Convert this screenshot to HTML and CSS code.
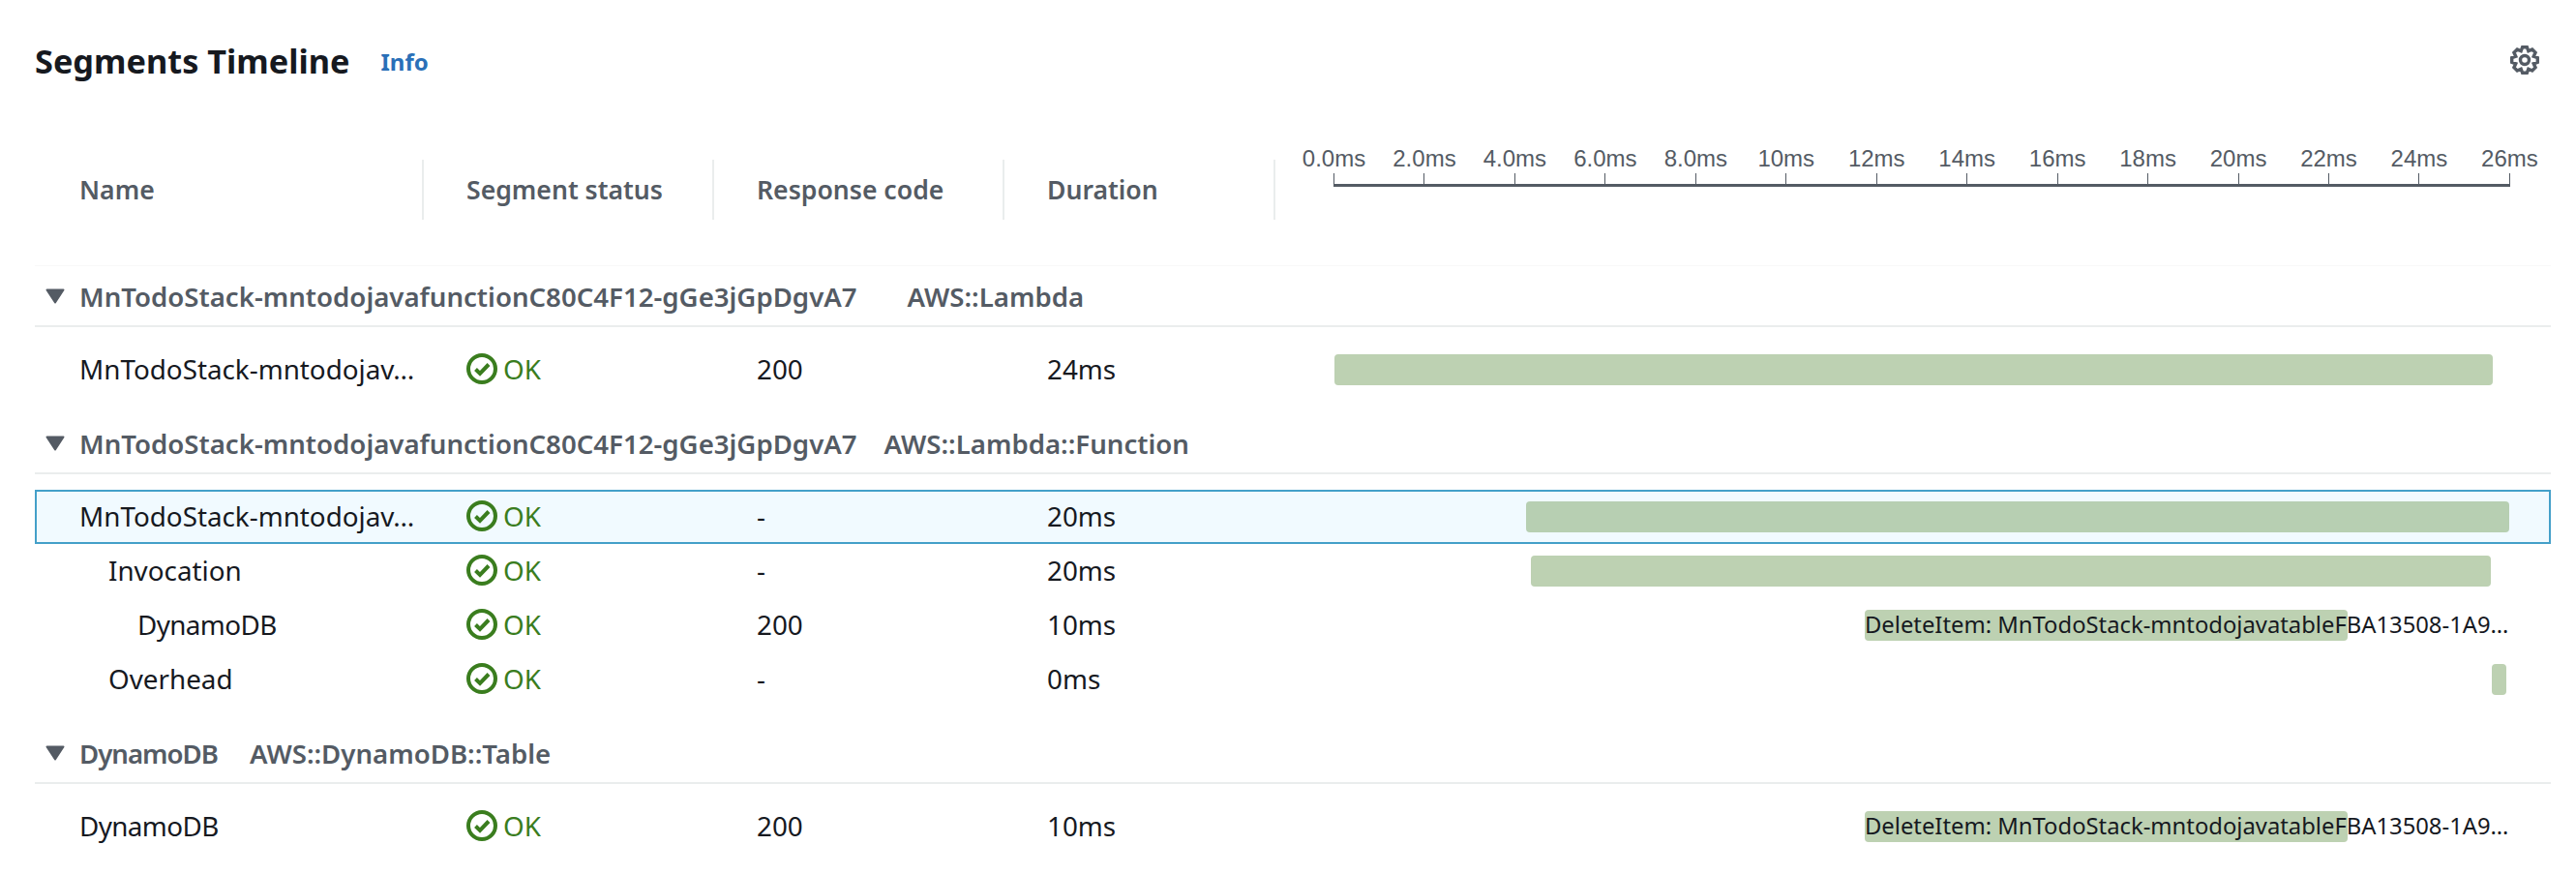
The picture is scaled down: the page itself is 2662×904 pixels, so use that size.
FILE: index.html
```html
<!DOCTYPE html>
<html lang="en">
<head>
<meta charset="utf-8">
<title>Segments Timeline</title>
<link rel="stylesheet" href="styles.css">
</head>
<body>
<main class="panel">
  <header class="title-bar">
    <h2 class="title">Segments Timeline</h2>
    <a class="info">Info</a>
    <svg class="gear" viewBox="0 0 32 32"><path d="M13.66 2.71H18.34L19.83 6.76 23.74 4.94 27.06 8.26 25.24 12.17 29.29 13.66V18.34L25.24 19.83 27.06 23.74 23.74 27.06 19.83 25.24 18.34 29.29H13.66L12.17 25.24 8.26 27.06 4.94 23.74 6.76 19.83 2.71 18.34V13.66L6.76 12.17 4.94 8.26 8.26 4.94 12.17 6.76Z"/><circle cx="16" cy="16" r="4.5"/></svg>
  </header>

  <div class="thead">
    <div class="th">Name</div>
    <div class="th">Segment status</div>
    <div class="th">Response code</div>
    <div class="th">Duration</div>
    <div class="th-axis">
      <div class="axis">
        <div class="tick"><span>0.0ms</span></div>
        <div class="tick"><span>2.0ms</span></div>
        <div class="tick"><span>4.0ms</span></div>
        <div class="tick"><span>6.0ms</span></div>
        <div class="tick"><span>8.0ms</span></div>
        <div class="tick"><span>10ms</span></div>
        <div class="tick"><span>12ms</span></div>
        <div class="tick"><span>14ms</span></div>
        <div class="tick"><span>16ms</span></div>
        <div class="tick"><span>18ms</span></div>
        <div class="tick"><span>20ms</span></div>
        <div class="tick"><span>22ms</span></div>
        <div class="tick"><span>24ms</span></div>
        <div class="tick"><span>26ms</span></div>
      </div>
    </div>
  </div>

  <section class="group">
    <div class="group-head">
      <svg class="caret" viewBox="0 0 20 16"><path d="M1.5 1.5H18.5L10 14.5Z"/></svg>
      <span class="group-name">MnTodoStack-mntodojavafunctionC80C4F12-gGe3jGpDgvA7</span>
      <span class="group-type gap-wide">AWS::Lambda</span>
    </div>
    <div class="rows">
      <div class="row">
        <div class="cell name">MnTodoStack-mntodojav…</div>
        <div class="cell status"><svg class="ok" viewBox="0 0 32 32"><circle cx="16" cy="16" r="14"/><path d="M9.5 16.5L14 21L23 11.5"/></svg>OK</div>
        <div class="cell">200</div>
        <div class="cell">24ms</div>
        <div class="track"><div class="bar" style="margin-left:1px;width:1197px"></div></div>
      </div>
    </div>
  </section>

  <section class="group">
    <div class="group-head">
      <svg class="caret" viewBox="0 0 20 16"><path d="M1.5 1.5H18.5L10 14.5Z"/></svg>
      <span class="group-name">MnTodoStack-mntodojavafunctionC80C4F12-gGe3jGpDgvA7</span>
      <span class="group-type gap-mid">AWS::Lambda::Function</span>
    </div>
    <div class="rows">
      <div class="row selected">
        <div class="cell name">MnTodoStack-mntodojav…</div>
        <div class="cell status"><svg class="ok" viewBox="0 0 32 32"><circle cx="16" cy="16" r="14"/><path d="M9.5 16.5L14 21L23 11.5"/></svg>OK</div>
        <div class="cell">-</div>
        <div class="cell">20ms</div>
        <div class="track"><div class="bar bar-selected" style="margin-left:199px;width:1016px"></div></div>
      </div>
      <div class="row">
        <div class="cell name indent-1">Invocation</div>
        <div class="cell status"><svg class="ok" viewBox="0 0 32 32"><circle cx="16" cy="16" r="14"/><path d="M9.5 16.5L14 21L23 11.5"/></svg>OK</div>
        <div class="cell">-</div>
        <div class="cell">20ms</div>
        <div class="track"><div class="bar" style="margin-left:204px;width:992px"></div></div>
      </div>
      <div class="row">
        <div class="cell name indent-2 tight">DynamoDB</div>
        <div class="cell status"><svg class="ok" viewBox="0 0 32 32"><circle cx="16" cy="16" r="14"/><path d="M9.5 16.5L14 21L23 11.5"/></svg>OK</div>
        <div class="cell">200</div>
        <div class="cell">10ms</div>
        <div class="track"><div class="bar" style="margin-left:549px;width:499px"><span class="bar-label">DeleteItem: MnTodoStack-mntodojavatableFBA13508-1A9…</span></div></div>
      </div>
      <div class="row">
        <div class="cell name indent-1">Overhead</div>
        <div class="cell status"><svg class="ok" viewBox="0 0 32 32"><circle cx="16" cy="16" r="14"/><path d="M9.5 16.5L14 21L23 11.5"/></svg>OK</div>
        <div class="cell">-</div>
        <div class="cell">0ms</div>
        <div class="track"><div class="bar" style="margin-left:1197px;width:15px"></div></div>
      </div>
    </div>
  </section>

  <section class="group">
    <div class="group-head">
      <svg class="caret" viewBox="0 0 20 16"><path d="M1.5 1.5H18.5L10 14.5Z"/></svg>
      <span class="group-name group-tight">DynamoDB</span>
      <span class="group-type gap-db">AWS::DynamoDB::Table</span>
    </div>
    <div class="rows">
      <div class="row">
        <div class="cell name tight">DynamoDB</div>
        <div class="cell status"><svg class="ok" viewBox="0 0 32 32"><circle cx="16" cy="16" r="14"/><path d="M9.5 16.5L14 21L23 11.5"/></svg>OK</div>
        <div class="cell">200</div>
        <div class="cell">10ms</div>
        <div class="track"><div class="bar" style="margin-left:549px;width:499px"><span class="bar-label">DeleteItem: MnTodoStack-mntodojavatableFBA13508-1A9…</span></div></div>
      </div>
    </div>
  </section>
</main>
</body>
</html>
```
FILE: styles.css
```css
* { box-sizing: border-box; }
html, body { margin: 0; padding: 0; background: #fff; }
body {
  width: 2662px;
  height: 904px;
  overflow: hidden;
  font-family: "Noto Sans", "Open Sans", sans-serif;
  font-size: 27.8px;
  color: #16191f;
}
.panel { padding: 0 26px 0 36px; }

.title-bar { display: flex; align-items: center; height: 124px; }
.title { margin: 0; font-size: 34.3px; font-weight: 700; color: #16191f; }
.info { margin-left: 32px; padding-top: 3px; font-size: 24px; font-weight: 700; color: #2a70b8; }
.gear { margin-left: auto; margin-right: 11px; width: 32px; height: 32px; }
.gear path, .gear circle { fill: none; stroke: #545b64; stroke-width: 3.4; }

.thead, .row { display: grid; grid-template-columns: 402px 300px 300px 280px 1fr; }
.thead { height: 151px; padding-top: 41px; border-bottom: 1px solid #f8f8f8; }
.th {
  height: 62px;
  padding-left: 44px;
  display: flex;
  align-items: center;
  font-size: 26.6px;
  font-weight: 600;
  color: #545b64;
  border-right: 2px solid #eaeded;
}
.th:first-child { padding-left: 46px; }
.th-axis { padding-left: 60px; }
.axis {
  display: flex;
  justify-content: space-between;
  width: 1216px;
  height: 14px;
  margin-top: 14px;
  border-bottom: 3px solid #545b64;
}
.tick {
  position: relative;
  width: 1px;
  height: 14px;
  background: #545b64;
}
.tick span {
  position: absolute;
  bottom: 17px;
  left: 50%;
  transform: translateX(-50%);
  font-family: "Liberation Sans", Arial, sans-serif;
  font-size: 24px;
  line-height: 24px;
  color: #545b64;
  white-space: nowrap;
}

.group { margin-bottom: 17px; }
.group-head {
  position: relative;
  display: flex;
  align-items: center;
  height: 63px;
  padding-left: 46px;
  border-bottom: 2px solid #eaeded;
  font-size: 27.6px;
  font-weight: 600;
  color: #545b64;
}
.caret { position: absolute; left: 11px; top: 23px; width: 20px; height: 16px; }
.caret path { fill: #545b64; stroke: #545b64; stroke-width: 2; stroke-linejoin: round; }
.gap-wide { margin-left: 52px; }
.gap-mid { margin-left: 28px; }
.gap-db { margin-left: 33px; }
.group-tight { letter-spacing: -1px; }

.rows { margin-top: 16px; }
.row { height: 56px; align-items: center; }
.row.selected {
  background: #f1faff;
  outline: 2px solid #44a0c9;
  outline-offset: -2px;
}
.cell { padding: 0 0 2px 44px; white-space: nowrap; overflow: hidden; }
.name { padding-left: 46px; }
.indent-1 { padding-left: 76px; }
.indent-2 { padding-left: 106px; }
.tight { letter-spacing: -0.6px; }
.status { display: flex; align-items: center; gap: 6px; padding-left: 44px; color: #3a7d1e; }
.ok { width: 32px; height: 32px; flex: none; }
.ok circle, .ok path { fill: none; stroke: #3a7d1e; stroke-width: 4; }
.track { padding-left: 60px; }
.bar { height: 32px; border-radius: 4px; background: #bdd1b2; }
.bar-selected { background: #b7cfb2; }
.bar-label { display: block; font-size: 23.8px; line-height: 31px; white-space: nowrap; }
```
